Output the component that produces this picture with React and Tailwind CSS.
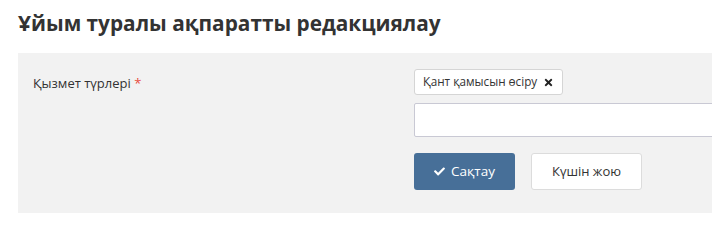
import { FaCheck, FaTimes } from 'react-icons/fa';

const App = () => {
  return (
    <div className="w-[712px] h-[245px] overflow-hidden bg-white font-['Open_Sans',sans-serif] text-[#333]">
      <h1 className="pl-[18px] pt-[9px] text-[20.8px] font-bold leading-[28px] text-[#333]">
        Ұйым туралы ақпаратты редакциялау
      </h1>
      <section className="ml-[18px] mt-[16px] w-[720px] bg-[#f2f2f2] pl-[15px] pt-[16px] pb-[23px]">
        <div className="flex">
          <label className="w-[381px] pt-[4px] text-[13px] leading-[20px] text-[#333]">
            Қызмет түрлері <span className="text-[#e74c3c]">*</span>
          </label>
          <div className="flex flex-col">
            <div className="flex">
              <span className="flex h-[26px] items-center gap-[6px] rounded-[3px] border border-[#d5d5d5] bg-white pl-[8px] pr-[8px] text-[11.7px] text-[#333]">
                Қант қамысын өсіру
                <FaTimes className="text-[11px] text-[#222]" />
              </span>
            </div>
            <input
              type="text"
              className="mt-[8px] h-[34px] w-[310px] rounded-[2px] border border-[#c9c9d4] bg-white"
            />
            <div className="mt-[16px] flex gap-[16px]">
              <button className="flex h-[37px] w-[101px] items-center justify-center gap-[6px] rounded-[3px] bg-[#476f98] text-[13.5px] text-white">
                <FaCheck className="text-[11px]" />
                Сақтау
              </button>
              <button className="flex h-[37px] w-[111px] items-center justify-center rounded-[3px] border border-[#dcdcdc] bg-white text-[13px] text-[#333]">
                Күшін жою
              </button>
            </div>
          </div>
        </div>
      </section>
    </div>
  );
};

export default App;
